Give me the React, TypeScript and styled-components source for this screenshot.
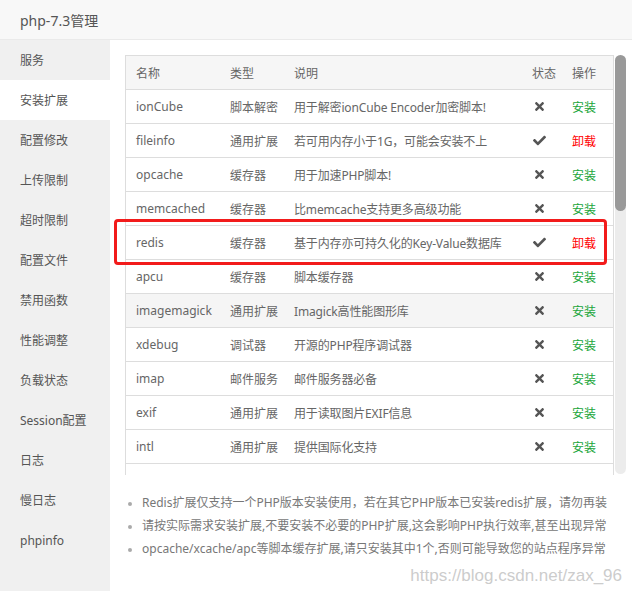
import styled, { createGlobalStyle } from "styled-components";
import { FaTimes, FaCheck } from "react-icons/fa";

const GlobalStyle = createGlobalStyle`
  html, body {
    margin: 0;
    padding: 0;
    background: #fff;
  }
  body {
    font-family: "Noto Sans", "Noto Sans CJK SC", sans-serif;
    color: #666;
  }
`;

const Frame = styled.div`
  width: 632px;
  height: 591px;
  overflow: hidden;
  position: relative;
`;

const Header = styled.div`
  height: 39px;
  border-bottom: 1px solid #eaeaea;
  background: #f8f8f8;
  display: flex;
  align-items: center;
  padding-left: 20px;
  font-size: 14px;
  color: #555;
`;

const Body = styled.div`
  display: flex;
  height: 551px;
`;

const Sidebar = styled.ul`
  width: 110px;
  margin: 0;
  padding: 0;
  list-style: none;
  background: #f0f0f0;
`;

const NavItem = styled.li<{ $active?: boolean }>`
  height: 40px;
  line-height: 41px;
  padding-left: 20px;
  font-size: 12px;
  color: #555;
  background: ${(p) => (p.$active ? "#fff" : "transparent")};
`;

const Content = styled.div`
  flex: 1;
  position: relative;
  padding: 15px 6px 0 15px;
`;

const ScrollArea = styled.div`
  display: flex;
  gap: 1px;
  height: 420px;
`;

const ScrollBox = styled.div`
  width: 489px;
  overflow: hidden;
`;

const Track = styled.div`
  width: 11px;
  height: 419px;
  background: #ececec;
  border-radius: 6px;
`;

const Thumb = styled.div`
  height: 156px;
  background: #999;
  border-radius: 6px;
`;

const Table = styled.table`
  width: 100%;
  border-collapse: collapse;
  border: 1px solid #ddd;
  font-size: 12px;
  table-layout: fixed;
`;

const Th = styled.th<{ $w?: number }>`
  width: ${(p) => (p.$w ? `${p.$w}px` : "auto")};
  height: 33px;
  padding: 0 0 0 10px;
  text-align: left;
  font-weight: normal;
  color: #666;
  background: #f6f6f6;
  border-bottom: 1px solid #ddd;
`;

const Tr = styled.tr<{ $hover?: boolean }>`
  background: ${(p) => (p.$hover ? "#f5f5f5" : "#fff")};
`;

const Td = styled.td`
  height: 33px;
  padding: 0 0 0 10px;
  border-bottom: 1px solid #ddd;
  color: #666;
  white-space: nowrap;
  overflow: hidden;
`;

const Desc = styled(Td)`
  letter-spacing: -0.15px;
`;

const StatusCell = styled(Td)`
  color: #555;
  padding-left: 11px;
  svg {
    display: block;
    font-size: 13px;
  }
`;

const Action = styled.a<{ $remove?: boolean }>`
  color: ${(p) => (p.$remove ? "#ff0000" : "#20a53a")};
  text-decoration: none;
`;

const Highlight = styled.div`
  position: absolute;
  left: 4px;
  top: 179px;
  width: 487px;
  height: 40px;
  border: 3px solid #f21b1b;
  border-radius: 4px;
  pointer-events: none;
`;

const Notes = styled.ul`
  margin: 16px 0 0;
  padding: 0 0 0 17px;
  font-size: 12px;
  line-height: 23px;
  color: #777;

  li {
    padding-left: 0;
    white-space: nowrap;
  }
  li::marker {
    color: #aaa;
    font-size: 10px;
  }
`;

const Watermark = styled.div`
  position: absolute;
  right: 10px;
  bottom: 5px;
  font-family: "Liberation Sans", Arial, sans-serif;
  font-size: 17px;
  color: rgba(190, 190, 190, 0.8);
`;

type Ext = { name: string; type: string; desc: string; installed: boolean };

const exts: Ext[] = [
  { name: "ionCube", type: "脚本解密", desc: "用于解密ionCube Encoder加密脚本!", installed: false },
  { name: "fileinfo", type: "通用扩展", desc: "若可用内存小于1G，可能会安装不上", installed: true },
  { name: "opcache", type: "缓存器", desc: "用于加速PHP脚本!", installed: false },
  { name: "memcached", type: "缓存器", desc: "比memcache支持更多高级功能", installed: false },
  { name: "redis", type: "缓存器", desc: "基于内存亦可持久化的Key-Value数据库", installed: true },
  { name: "apcu", type: "缓存器", desc: "脚本缓存器", installed: false },
  { name: "imagemagick", type: "通用扩展", desc: "Imagick高性能图形库", installed: false },
  { name: "xdebug", type: "调试器", desc: "开源的PHP程序调试器", installed: false },
  { name: "imap", type: "邮件服务", desc: "邮件服务器必备", installed: false },
  { name: "exif", type: "通用扩展", desc: "用于读取图片EXIF信息", installed: false },
  { name: "intl", type: "通用扩展", desc: "提供国际化支持", installed: false },
];

const nav = [
  "服务",
  "安装扩展",
  "配置修改",
  "上传限制",
  "超时限制",
  "配置文件",
  "禁用函数",
  "性能调整",
  "负载状态",
  "Session配置",
  "日志",
  "慢日志",
  "phpinfo",
];

export default function App() {
  return (
    <Frame>
      <GlobalStyle />
      <Header>php-7.3管理</Header>
      <Body>
        <Sidebar>
          {nav.map((n) => (
            <NavItem key={n} $active={n === "安装扩展"}>
              {n}
            </NavItem>
          ))}
        </Sidebar>
        <Content>
          <ScrollArea>
            <ScrollBox>
              <Table>
                <thead>
                  <tr>
                    <Th $w={84}>名称</Th>
                    <Th $w={54}>类型</Th>
                    <Th>说明</Th>
                    <Th $w={30}>状态</Th>
                    <Th $w={41}>操作</Th>
                  </tr>
                </thead>
                <tbody>
                  {exts.map((e) => (
                    <Tr key={e.name} $hover={e.name === "imagemagick"}>
                      <Td>{e.name}</Td>
                      <Td>{e.type}</Td>
                      <Desc>{e.desc}</Desc>
                      <StatusCell>{e.installed ? <FaCheck /> : <FaTimes />}</StatusCell>
                      <Td>
                        <Action href="#" $remove={e.installed}>
                          {e.installed ? "卸载" : "安装"}
                        </Action>
                      </Td>
                    </Tr>
                  ))}
                  {/* next row is scrolled out of view */}
                  <Tr>
                    <Td colSpan={5} />
                  </Tr>
                </tbody>
              </Table>
            </ScrollBox>
            <Track>
              <Thumb />
            </Track>
          </ScrollArea>
          <Highlight />
          <Notes>
            <li>Redis扩展仅支持一个PHP版本安装使用，若在其它PHP版本已安装redis扩展，请勿再装</li>
            <li>请按实际需求安装扩展,不要安装不必要的PHP扩展,这会影响PHP执行效率,甚至出现异常</li>
            <li>opcache/xcache/apc等脚本缓存扩展,请只安装其中1个,否则可能导致您的站点程序异常</li>
          </Notes>
        </Content>
      </Body>
      <Watermark>https://blog.csdn.net/zax_96</Watermark>
    </Frame>
  );
}
